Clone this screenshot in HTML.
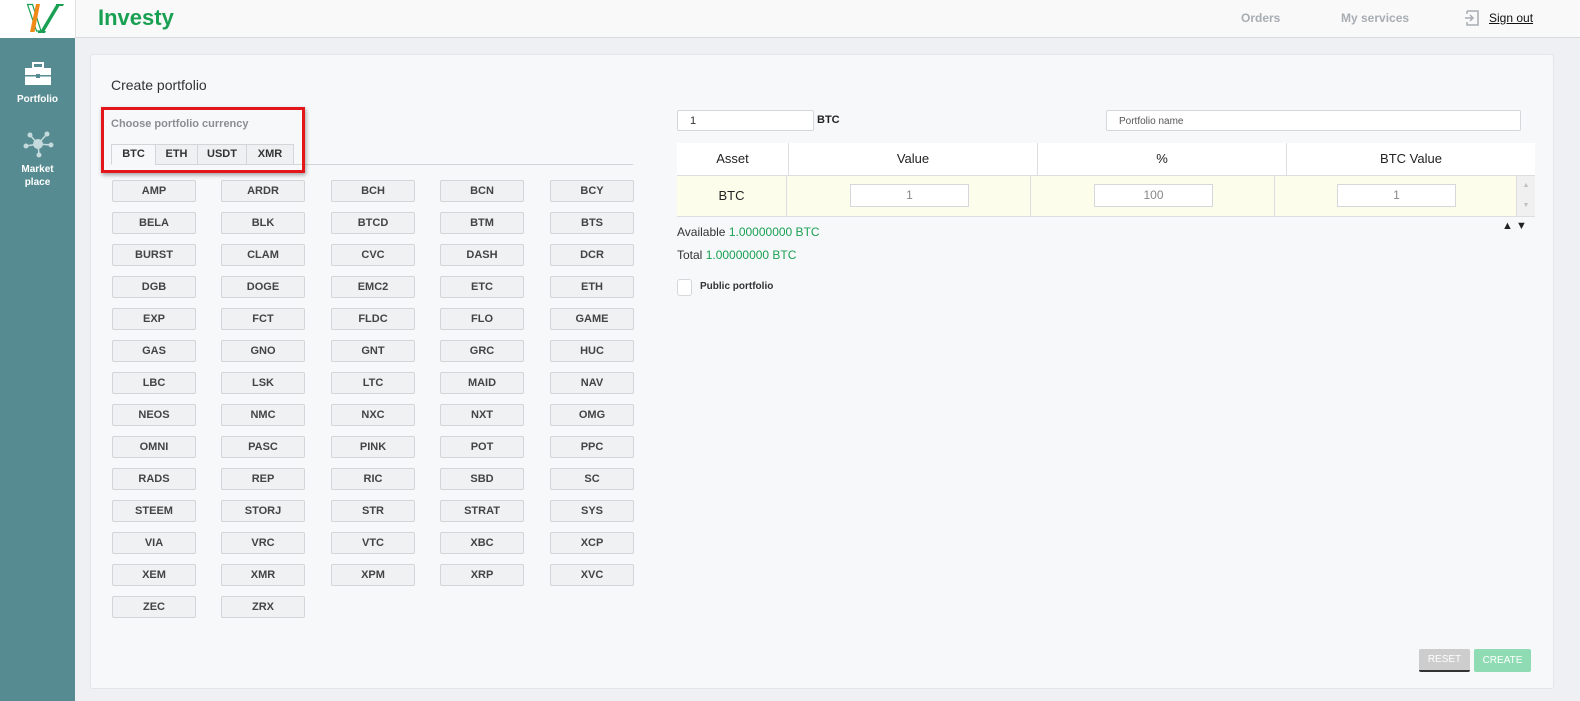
<!DOCTYPE html>
<html><head><meta charset="utf-8"><style>
*{box-sizing:border-box;margin:0;padding:0}
body{width:1580px;height:701px;overflow:hidden;background:#eef0f3;font-family:"Liberation Sans",sans-serif;position:relative}
.abs{position:absolute}
.hdr{left:0;top:0;width:1580px;height:38px;background:#f9f9f9;border-bottom:1px solid #d8dadd}
.logo{left:0;top:0;width:76px;height:38px;background:#fff;border-right:1px solid #e0e0e0}
.side{left:0;top:38px;width:75px;height:663px;background:#568b91}
.card{left:90px;top:54px;width:1464px;height:635px;background:#f7f8fa;border:1px solid #e3e5e8;border-radius:3px}
.btn{position:absolute;width:84px;height:22px;background:#f0f1f3;border:1px solid #d3d5d8;border-radius:2px;font-size:11px;font-weight:bold;color:#444;text-align:center;line-height:20px}
.tab{position:absolute;top:144px;height:21px;border:1px solid #d3d5d8;background:#eef0f2;font-size:11px;font-weight:bold;color:#333;text-align:center;line-height:19px}
.inp{position:absolute;background:#fff;border:1px solid #d5d7da;border-radius:2px}
.th{position:absolute;top:143px;height:32px;background:#fff;font-size:13px;color:#222;text-align:center;line-height:32px;border-right:1px solid #dcdee2}
.td{position:absolute;top:176px;height:40px;background:#fdfdec;border-right:1px solid #dcdee2}
.g{color:#1aa053}
</style></head><body>
<div class="abs hdr"></div>
<div class="abs logo">
<svg width="76" height="38" viewBox="0 0 76 38">
<path d="M27.5 4.5 L32.5 4.5 L41 31 L36.5 31 Z" fill="none" stroke="#1aa053" stroke-width="1.2"/>
<path d="M36 4 L40 4 L34.5 32 L30 32 Z" fill="#f28a1a"/>
<path d="M40 32 L44 32 L60 5 L56 5 Z" fill="#1aa053"/>
<path d="M56 4 L64 4 L63 6 L56 6 Z" fill="#1aa053"/>
<path d="M38 31 L46 31 L45 33 L38 33 Z" fill="#1aa053"/>
</svg>
</div>
<div class="abs" style="left:98px;top:5px;font-size:22px;font-weight:bold;color:#1aa053">Investy</div>
<div class="abs" style="left:1241px;top:11px;font-size:12px;font-weight:bold;color:#a8adb3">Orders</div>
<div class="abs" style="left:1341px;top:11px;font-size:12px;font-weight:bold;color:#a8adb3">My services</div>
<svg class="abs" style="left:1464px;top:10px" width="16" height="16" viewBox="0 0 16 16"><path d="M3 1h11v14H3v-3M3 1v3" fill="none" stroke="#a8adb3" stroke-width="1.5"/><path d="M1 8h8M6 5l3 3-3 3" fill="none" stroke="#a8adb3" stroke-width="1.5"/></svg>
<div class="abs" style="left:1489px;top:11px;font-size:12px;color:#111;text-decoration:underline">Sign out</div>
<div class="abs side"></div>
<svg class="abs" style="left:24px;top:62px" width="28" height="24" viewBox="0 0 28 24"><rect x="9" y="1" width="10" height="5" fill="none" stroke="#fff" stroke-width="2"/><rect x="1" y="6" width="26" height="17" fill="#fff"/><rect x="1" y="13" width="26" height="1.5" fill="#568b91"/><rect x="12" y="12" width="4" height="4" fill="#568b91"/></svg>
<div class="abs" style="left:0;top:94px;width:75px;text-align:center;font-size:10px;font-weight:bold;color:#fff">Portfolio</div>
<svg class="abs" style="left:22px;top:130px" width="32" height="28" viewBox="0 0 32 28"><g stroke="#c5dadc" stroke-width="1.5"><line x1="16" y1="14" x2="8" y2="5"/><line x1="16" y1="14" x2="25" y2="4"/><line x1="16" y1="14" x2="4" y2="16"/><line x1="16" y1="14" x2="29" y2="15"/><line x1="16" y1="14" x2="17" y2="25"/></g><g fill="#c5dadc"><circle cx="16" cy="14" r="5"/><circle cx="8" cy="5" r="2.5"/><circle cx="25" cy="4" r="2.5"/><circle cx="4" cy="16" r="2.5"/><circle cx="29" cy="15" r="2.5"/><circle cx="17" cy="25" r="2.5"/></g></svg>
<div class="abs" style="left:0;top:163px;width:75px;text-align:center;font-size:10px;font-weight:bold;color:#fff;line-height:13px">Market<br>place</div>
<div class="abs card"></div>
<div class="abs" style="left:111px;top:77px;font-size:14px;color:#333">Create portfolio</div>
<div class="abs" style="left:111px;top:118px;font-size:11px;font-weight:bold;color:#8a8d91">Choose portfolio currency</div>
<div class="abs" style="left:111px;top:164px;width:522px;height:1px;background:#d3d5d8"></div>
<div class="tab" style="left:111px;width:45px;background:#f7f8fa;border-bottom-color:#f7f8fa">BTC</div>
<div class="tab" style="left:155px;width:43px">ETH</div>
<div class="tab" style="left:197px;width:50px">USDT</div>
<div class="tab" style="left:246px;width:48px">XMR</div>
<div class="abs" style="left:101px;top:107px;width:204px;height:66px;border:3px solid #e3161b;box-shadow:1px 2px 4px rgba(0,0,0,.35)"></div>
<div id="grid"></div>
<div class="inp" style="left:677px;top:110px;width:137px;height:21px;font-size:11px;color:#333;padding:4px 12px">1</div>
<div class="abs" style="left:817px;top:114px;font-size:11px;font-weight:bold;color:#222">BTC</div>
<div class="inp" style="left:1106px;top:110px;width:415px;height:21px;font-size:10px;color:#555;padding:5px 12px">Portfolio name</div>
<div class="th" style="left:677px;width:112px">Asset</div>
<div class="th" style="left:789px;width:249px">Value</div>
<div class="th" style="left:1038px;width:249px">%</div>
<div class="th" style="left:1287px;width:248px;border-right:none">BTC Value</div>
<div class="abs" style="left:677px;top:175px;width:858px;height:1px;background:#dcdee2"></div>
<div class="td" style="left:677px;width:110px;font-size:13px;color:#222;text-align:center;line-height:40px">BTC</div>
<div class="td" style="left:787px;width:244px"></div>
<div class="td" style="left:1031px;width:244px"></div>
<div class="td" style="left:1275px;width:242px"></div>
<div class="abs" style="left:1517px;top:176px;width:18px;height:40px;background:#f0f0f0;color:#c0c0c0;font-size:7px;text-align:center;line-height:20px">▲<br>▼</div>
<div class="abs" style="left:677px;top:216px;width:858px;height:1px;background:#dcdee2"></div>
<div class="inp" style="left:850px;top:184px;width:119px;height:23px;border-radius:0;text-align:center;font-size:12px;color:#888;line-height:21px">1</div>
<div class="inp" style="left:1094px;top:184px;width:119px;height:23px;border-radius:0;text-align:center;font-size:12px;color:#888;line-height:21px">100</div>
<div class="inp" style="left:1337px;top:184px;width:119px;height:23px;border-radius:0;text-align:center;font-size:12px;color:#888;line-height:21px">1</div>
<div class="abs" style="left:1502px;top:220px;font-size:11px;color:#222">▲ ▼</div>
<div class="abs" style="left:677px;top:225px;font-size:12px;color:#333">Available <span class="g">1.00000000 BTC</span></div>
<div class="abs" style="left:677px;top:248px;font-size:12px;color:#333">Total <span class="g">1.00000000 BTC</span></div>
<div class="inp" style="left:677px;top:279px;width:15px;height:17px;border-radius:3px"></div>
<div class="abs" style="left:700px;top:281px;font-size:10px;font-weight:bold;color:#333">Public portfolio</div>
<div class="abs" style="left:1419px;top:649px;width:51px;height:23px;background:#cdcdcd;border-bottom:2px solid #333;border-radius:2px;color:#fff;font-size:10px;text-align:center;line-height:21px">RESET</div>
<div class="abs" style="left:1474px;top:649px;width:57px;height:23px;background:#8fdcb4;border-radius:2px;color:#fff;font-size:10px;text-align:center;line-height:23px">CREATE</div>
<script>
var c="AMP ARDR BCH BCN BCY BELA BLK BTCD BTM BTS BURST CLAM CVC DASH DCR DGB DOGE EMC2 ETC ETH EXP FCT FLDC FLO GAME GAS GNO GNT GRC HUC LBC LSK LTC MAID NAV NEOS NMC NXC NXT OMG OMNI PASC PINK POT PPC RADS REP RIC SBD SC STEEM STORJ STR STRAT SYS VIA VRC VTC XBC XCP XEM XMR XPM XRP XVC ZEC ZRX".split(" ");
var xs=[112,221,331,440,550],h="";
c.forEach(function(n,i){h+='<div class="btn" style="left:'+xs[i%5]+'px;top:'+(180+Math.floor(i/5)*32)+'px">'+n+'</div>'});
document.getElementById("grid").innerHTML=h;
</script>
</body></html>
